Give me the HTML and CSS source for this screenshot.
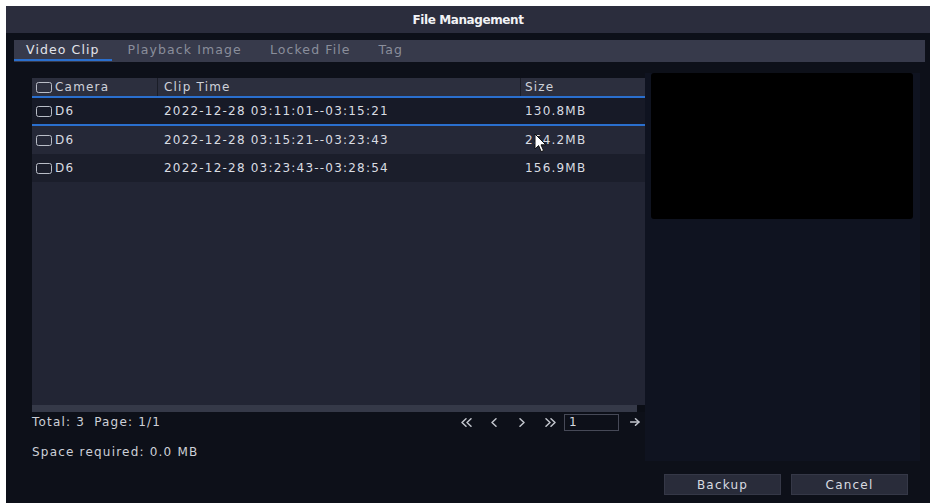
FILE: index.html
```html
<!DOCTYPE html>
<html lang="en">
<head>
<meta charset="utf-8">
<title>File Management</title>
<link rel="stylesheet" href="styles.css">
</head>
<body>
<div class="dialog">
  <div class="titlebar">File Management</div>

  <div class="tabbar">
    <div class="tab active">Video Clip</div>
    <div class="tab">Playback Image</div>
    <div class="tab">Locked File</div>
    <div class="tab">Tag</div>
  </div>

  <div class="main">
    <div class="left">
      <div class="table">
        <div class="thead">
          <div class="th col-cam"><span class="check"></span>Camera</div>
          <div class="th col-time">Clip Time</div>
          <div class="th col-size">Size</div>
        </div>
        <div class="tbody">
          <div class="row selected">
            <div class="td col-cam"><span class="check"></span>D6</div>
            <div class="td col-time">2022-12-28 03:11:01--03:15:21</div>
            <div class="td col-size">130.8MB</div>
          </div>
          <div class="row light">
            <div class="td col-cam"><span class="check"></span>D6</div>
            <div class="td col-time">2022-12-28 03:15:21--03:23:43</div>
            <div class="td col-size">254.2MB</div>
          </div>
          <div class="row dark">
            <div class="td col-cam"><span class="check"></span>D6</div>
            <div class="td col-time">2022-12-28 03:23:43--03:28:54</div>
            <div class="td col-size">156.9MB</div>
          </div>
        </div>
        <div class="hscroll">
          <div class="thumb"></div>
          <div class="corner"></div>
        </div>
      </div>

      <div class="pager">
        <div class="total"><span>Total: 3</span><span class="page">Page: 1/1</span></div>
        <div class="pages">
          <span class="nav" title="First page">
            <svg width="13" height="9" viewBox="0 0 13 9"><polyline points="6,0.8 2,4.5 6,8.2" /><polyline points="11,0.8 7,4.5 11,8.2" /></svg>
          </span>
          <span class="nav" title="Previous page">
            <svg width="8" height="9" viewBox="0 0 8 9"><polyline points="6,0.8 2,4.5 6,8.2" /></svg>
          </span>
          <span class="nav" title="Next page">
            <svg width="8" height="9" viewBox="0 0 8 9"><polyline points="2,0.8 6,4.5 2,8.2" /></svg>
          </span>
          <span class="nav" title="Last page">
            <svg width="13" height="9" viewBox="0 0 13 9"><polyline points="2,0.8 6,4.5 2,8.2" /><polyline points="7,0.8 11,4.5 7,8.2" /></svg>
          </span>
          <span class="page-input">1</span>
          <span class="go" title="Go">
            <svg width="10" height="8" viewBox="0 0 10 8"><polyline points="5.5,0.8 9,4 5.5,7.2" /><line x1="0.5" y1="4" x2="8.8" y2="4" /></svg>
          </span>
        </div>
      </div>

      <div class="space">Space required: 0.0 MB</div>
    </div>

    <div class="right">
      <div class="preview"></div>
    </div>
  </div>

  <div class="actions">
    <button class="btn">Backup</button>
    <button class="btn">Cancel</button>
  </div>
</div>

<svg class="cursor" width="14" height="21" viewBox="0 0 14 21">
  <path d="M1 1 L1 16 L4.6 12.6 L7.2 18.6 L9.6 17.6 L7 11.8 L11.8 11.8 Z" />
</svg>
</body>
</html>
```

FILE: styles.css
```css
* {
  box-sizing: border-box;
  margin: 0;
  padding: 0;
}

html,
body {
  width: 930px;
  height: 503px;
  overflow: hidden;
  background: #ffffff;
}

body {
  padding: 6px 0 0 6px;
  font-family: "DejaVu Sans", "Liberation Sans", sans-serif;
  font-size: 12px;
  letter-spacing: 1.2px;
  color: #d6d9df;
}

.dialog {
  height: 497px;
  background: #0d1019;
  display: flex;
  flex-direction: column;
}

/* title strip */
.titlebar {
  height: 27px;
  background: #2b2d3d;
  display: flex;
  align-items: center;
  justify-content: center;
  font-weight: bold;
  font-size: 12px;
  letter-spacing: -0.4px;
  color: #f2f3f6;
}

/* tabs */
.tabbar {
  margin: 7px 5px 0 8px;
  height: 22px;
  background: #373a4b;
  display: flex;
  gap: 4px;
}

.tab {
  height: 21px;
  line-height: 20px;
  padding: 0 12px;
  font-size: 12.5px;
  letter-spacing: 1.1px;
  color: #8a8e9b;
}

.tab.active {
  color: #e2e4ea;
  border-bottom: 2px solid #2a6fce;
}

/* body: list + preview */
.main {
  display: flex;
  margin-top: 11px;
  padding-left: 26px;
}

.left {
  width: 613px;
  padding-top: 5px;
  display: flex;
  flex-direction: column;
}

.table {
  height: 334px;
  display: flex;
  flex-direction: column;
}

.thead,
.row {
  display: grid;
  grid-template-columns: 126px 363px 124px;
  align-items: center;
}

.thead {
  height: 20px;
  background: #2c2f3e;
  border-bottom: 2px solid #2a6fce;
  color: #cfd2da;
}

.th {
  height: 18px;
  line-height: 18px;
}

.th.col-cam,
.th.col-time {
  border-right: 1px solid #1a1d27;
}

.col-cam {
  padding-left: 4px;
  display: flex;
  align-items: center;
}

.col-time {
  padding-left: 6px;
}

.col-size {
  padding-left: 4px;
}

.check {
  display: inline-block;
  width: 16px;
  height: 11px;
  border: 1.4px solid #b9bdc7;
  border-radius: 2.5px;
  margin-right: 3px;
}

.tbody {
  flex: 1;
  background: #222534;
}

.row {
  height: 28px;
  color: #d9dce2;
}

.row.selected {
  background: #171a27;
  border-bottom: 2px solid #2a6fce;
}

.row.light {
  background: #252837;
}

.row.dark {
  background: #1b1e2b;
}

.hscroll {
  height: 7px;
  display: flex;
}

.hscroll .thumb {
  flex: 1;
  background: #353948;
}

.hscroll .corner {
  width: 8px;
  background: #0b0e16;
}

/* paging */
.pager {
  margin-top: 1px;
  height: 18px;
  display: flex;
  align-items: center;
  justify-content: space-between;
  color: #cdd0d8;
}

.total .page {
  margin-left: 9px;
}

.pages {
  display: flex;
  align-items: center;
}

.nav {
  width: 28px;
  height: 18px;
  display: flex;
  align-items: center;
  justify-content: center;
}

.pages svg {
  fill: none;
  stroke: #c3c6ce;
  stroke-width: 1.5;
  stroke-linecap: round;
  stroke-linejoin: round;
}

.page-input {
  width: 55px;
  height: 17px;
  border: 1px solid #464957;
  padding-left: 4px;
  line-height: 15px;
  color: #d6d9df;
}

.go {
  width: 26px;
  height: 18px;
  display: flex;
  align-items: center;
  justify-content: flex-end;
  padding-right: 5px;
}

.space {
  margin-top: 12px;
  line-height: 18px;
  color: #cdd0d8;
}

.right {
  width: 275px;
  background: #0f1320;
  padding: 0 7px 0 6px;
}

.preview {
  height: 146px;
  background: #000000;
  border-radius: 3px;
}

/* dialog buttons */
.actions {
  display: flex;
  justify-content: flex-end;
  gap: 10px;
  padding-right: 22px;
  margin-top: 13px;
}

.btn {
  width: 117px;
  height: 21px;
  background: #292c3a;
  border: 1px solid #353847;
  color: #d8dbe1;
  font-family: inherit;
  font-size: 12px;
  letter-spacing: 1.2px;
}

/* mouse pointer */
.cursor {
  position: absolute;
  left: 534px;
  top: 133px;
}

.cursor path {
  fill: #ffffff;
  stroke: #101010;
  stroke-width: 1;
  stroke-linejoin: round;
}
```
